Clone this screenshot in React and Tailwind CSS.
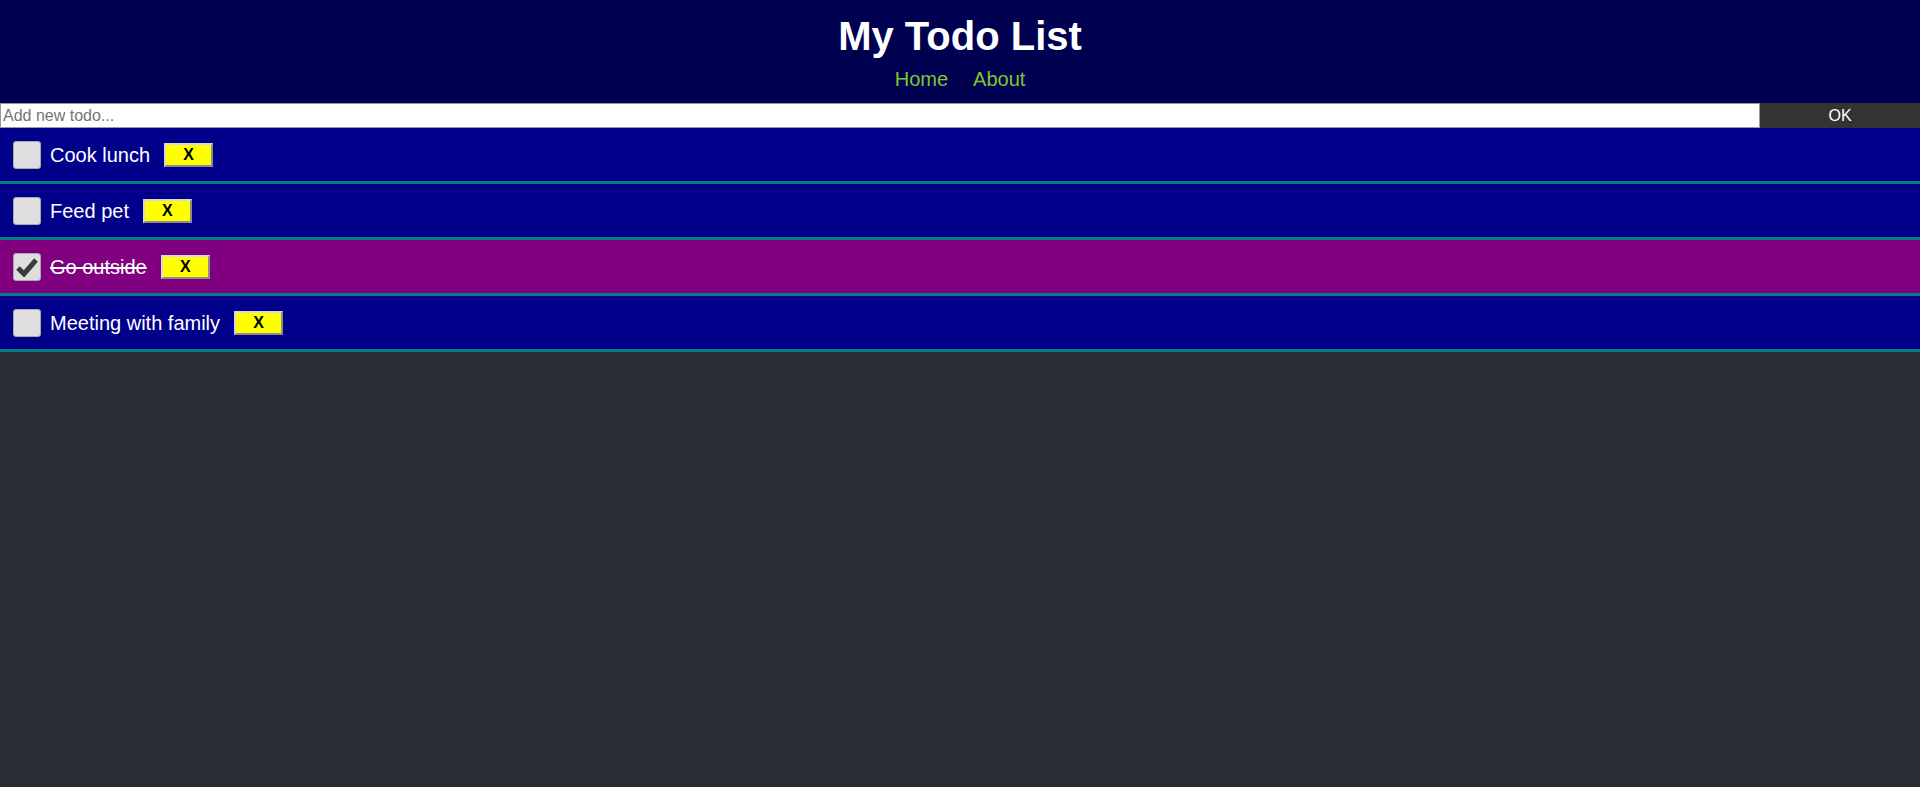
import { useState } from 'react';

const initialTodos = [
  { id: 1, title: 'Cook lunch', done: false },
  { id: 2, title: 'Feed pet', done: false },
  { id: 3, title: 'Go outside', done: true },
  { id: 4, title: 'Meeting with family', done: false },
];

function CheckBox({ checked, onChange }) {
  return (
    <button
      onClick={onChange}
      className="w-[28px] h-[28px] shrink-0 bg-[#dedede] border border-[#a9a9a9] rounded-[3px] flex items-center justify-center"
    >
      {checked && (
        <svg width="22" height="20" viewBox="0 0 22 20">
          <path d="M2 11 L8 17 L20 3" fill="none" stroke="#3b3b3b" strokeWidth="5" strokeLinejoin="miter" />
        </svg>
      )}
    </button>
  );
}

export default function App() {
  const [todos, setTodos] = useState(initialTodos);
  const [text, setText] = useState('');

  const toggle = (id) => setTodos(todos.map(t => (t.id === id ? { ...t, done: !t.done } : t)));
  const remove = (id) => setTodos(todos.filter(t => t.id !== id));
  const add = () => {
    if (!text.trim()) return;
    setTodos([...todos, { id: Date.now(), title: text, done: false }]);
    setText('');
  };

  return (
    <div className="min-h-screen bg-[#282c34] font-['Liberation_Sans',Arial,sans-serif]">
      {/* Header */}
      <header className="bg-[#000050] text-center pt-[13px] pb-[12px]">
        <h1 className="text-[40px] leading-[46px] font-bold text-white">My Todo List</h1>
        <nav className="mt-[9px] flex justify-center gap-[25px] text-[20px] leading-[23px] text-[#7bc832]">
          <a href="#">Home</a>
          <a href="#">About</a>
        </nav>
      </header>

      {/* Add todo */}
      <div className="flex h-[25px]">
        <input
          value={text}
          onChange={e => setText(e.target.value)}
          placeholder="Add new todo..."
          className="flex-1 bg-white border border-[#9a9a9a] px-[2px] text-[16px] text-black placeholder:text-[#757575] outline-none"
        />
        <button onClick={add} className="w-[160px] bg-[#333333] text-white text-[16px]">
          OK
        </button>
      </div>

      {/* Todo list */}
      <ul>
        {todos.map(todo => (
          <li
            key={todo.id}
            className={`h-[56px] flex items-center pl-[13px] border-b-[3px] border-[#008080] ${
              todo.done ? 'bg-[#800080]' : 'bg-[#00008b]'
            }`}
          >
            <CheckBox checked={todo.done} onChange={() => toggle(todo.id)} />
            <span className={`ml-[9px] text-[20px] text-white ${todo.done ? 'line-through' : ''}`}>
              {todo.title}
            </span>
            <button
              onClick={() => remove(todo.id)}
              className="ml-[14px] w-[49px] h-[24px] bg-[#ffff00] border-2 border-t-[#d8d8d8] border-l-[#d8d8d8] border-r-[#8c8c8c] border-b-[#8c8c8c] text-black font-bold text-[16px] leading-none"
            >
              X
            </button>
          </li>
        ))}
      </ul>
    </div>
  );
}
